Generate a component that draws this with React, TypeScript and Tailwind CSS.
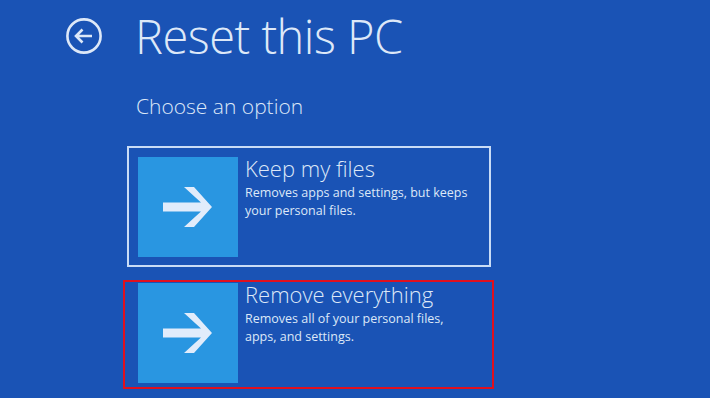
function ArrowTile() {
  return (
    <div className="flex h-[100px] w-[100px] shrink-0 items-center justify-center bg-[#2996e1]">
      <svg width="100" height="100" viewBox="0 0 100 100">
        <polygon
          points="25,45.5 63,45.5 46,30 56,30 74,50 56,70 46,70 63,54.5 25,54.5"
          fill="#e1ecfb"
        />
      </svg>
    </div>
  );
}

interface Option {
  id: string;
  title: string;
  lines: string[];
  focused: boolean;
  marked: boolean;
}

export default function App() {
  const options: Option[] = [
    {
      id: "keep",
      title: "Keep my files",
      lines: ["Removes apps and settings, but keeps", "your personal files."],
      focused: true,
      marked: false,
    },
    {
      id: "remove",
      title: "Remove everything",
      lines: ["Removes all of your personal files,", "apps, and settings."],
      focused: false,
      marked: true,
    },
  ];

  return (
    <div
      className="h-[398px] w-[710px] overflow-hidden bg-[#1a53b5] text-[#dde8f8]"
      style={{ fontFamily: '"Open Sans", "Noto Sans", sans-serif' }}
    >
      <div className="flex items-center pl-[66px] pt-[9px]">
        <svg width="36" height="36" viewBox="0 0 36 36" className="shrink-0">
          <circle cx="18" cy="18" r="16.6" fill="none" stroke="#dde8f8" strokeWidth="2.6" />
          <path
            d="M10 18 H26 M16.5 11.5 L10 18 L16.5 24.5"
            fill="none"
            stroke="#dde8f8"
            strokeWidth="2.6"
            strokeLinejoin="miter"
          />
        </svg>
        <h1 className="ml-[33px] text-[47px] font-light leading-[54px] tracking-[-0.5px]">
          Reset this PC
        </h1>
      </div>

      <p className="ml-[136px] mt-[29px] text-[21px] font-light leading-[28px]">Choose an option</p>

      <div className="ml-[127px] mt-[26px] flex w-[364px] flex-col gap-[5px]">
        {options.map((opt) => (
          <div
            key={opt.id}
            className={`relative flex h-[121px] gap-[7px] border-2 p-[9px] ${
              opt.focused ? "border-[#c9dcf6]" : "border-transparent"
            }`}
          >
            <ArrowTile />
            <div className="flex flex-col">
              <p className="-mt-[3px] text-[22px] font-light leading-[28px]">{opt.title}</p>
              <div className="mt-[2px] text-[12.5px] leading-[18px]">
                {opt.lines.map((l) => (
                  <p key={l}>{l}</p>
                ))}
              </div>
            </div>
            {opt.marked && (
              <div className="absolute left-[-6px] top-[6px] h-[109px] w-[371px] border-2 border-[#e0101e]" />
            )}
          </div>
        ))}
      </div>
    </div>
  );
}
